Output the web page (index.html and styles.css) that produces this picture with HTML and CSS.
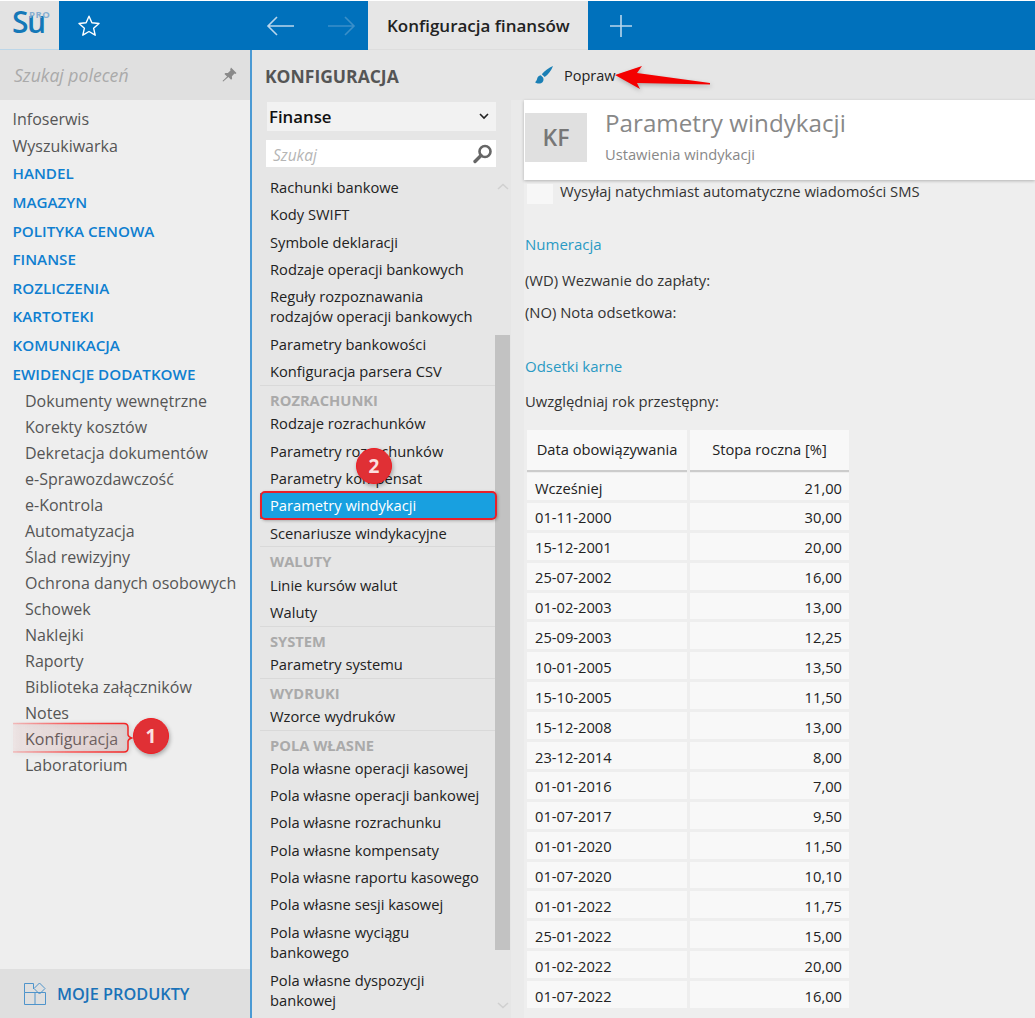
FILE: index.html
```html
<!DOCTYPE html>
<html lang="pl">
<head>
<meta charset="utf-8">
<title>Konfiguracja finansów</title>
<link rel="stylesheet" href="styles.css">
</head>
<body>
<div class="app">
  <header class="topbar">
    <div class="logo"><span class="logo-su">Su</span><span class="logo-pro">PRO</span></div>
    <div class="fav"><svg width="24" height="24" viewBox="0 0 24 24"><path d="M12 2.200l2.900 6.600 7.100.7-5.400 4.700 1.600 7-6.200-3.700-6.200 3.700 1.600-7L2 9.500l7.100-.7z" fill="none" stroke="#fff" stroke-width="1.400" stroke-linejoin="round"/></svg></div>
    <div class="navs">
      <svg width="30" height="22" viewBox="0 0 30 22"><path d="M28 11H2M11 2l-9 9 9 9" fill="none" stroke="#b9d6ec" stroke-width="1.600"/></svg>
      <svg width="30" height="22" viewBox="0 0 30 22"><path d="M2 11h26M19 2l9 9-9 9" fill="none" stroke="#3a8fc9" stroke-width="1.600"/></svg>
    </div>
    <div class="tab">Konfiguracja finansów</div>
    <div class="plus"><svg width="22" height="22" viewBox="0 0 22 22"><path d="M11 0v22M0 11h22" stroke="#b9d6ec" stroke-width="1.600"/></svg></div>
  </header>
  <div class="main">
    <aside class="side">
      <div class="side-search"><span>Szukaj poleceń</span>
        <svg width="16" height="16" viewBox="0 0 16 16"><path d="M10 .5l5.500 5.500-1 .9-1-.3-2.600 2.600.2 2.500-1 1-2.700-2.700L2.300 14.600 1.500 14l4.600-4.500L3.400 6.900l1-1 2.500.2L9.500 3.500 9.200 2.400z" fill="#8a8a8a"/></svg>
      </div>
      <nav class="side-menu">
        <a class="plain">Infoserwis</a>
        <a class="plain">Wyszukiwarka</a>
        <a class="cat">HANDEL</a>
        <a class="cat">MAGAZYN</a>
        <a class="cat">POLITYKA CENOWA</a>
        <a class="cat">FINANSE</a>
        <a class="cat">ROZLICZENIA</a>
        <a class="cat">KARTOTEKI</a>
        <a class="cat">KOMUNIKACJA</a>
        <a class="cat">EWIDENCJE DODATKOWE</a>
        <a class="sub">Dokumenty wewnętrzne</a>
        <a class="sub">Korekty kosztów</a>
        <a class="sub">Dekretacja dokumentów</a>
        <a class="sub">e-Sprawozdawczość</a>
        <a class="sub">e-Kontrola</a>
        <a class="sub">Automatyzacja</a>
        <a class="sub">Ślad rewizyjny</a>
        <a class="sub">Ochrona danych osobowych</a>
        <a class="sub">Schowek</a>
        <a class="sub">Naklejki</a>
        <a class="sub">Raporty</a>
        <a class="sub">Biblioteka załączników</a>
        <a class="sub">Notes</a>
        <a class="sub">Konfiguracja</a>
        <a class="sub">Laboratorium</a>
      </nav>
      <div class="products">
        <svg width="24" height="24" viewBox="0 0 24 24" fill="none" stroke="#4f94cb" stroke-width="1"><path d="M12 10.500H1.500V1.500H10.500V7M1.500 10.500V22.500H12V10.500H22.500V22.500H12"/><path d="M16.500 1l5.500 5.500-5.500 5.500L11 6.500z"/></svg>
        <span>MOJE PRODUKTY</span>
      </div>
    </aside>
    <section class="config">
      <h2 class="config-title">KONFIGURACJA</h2>
      <div class="select">Finanse<svg width="10" height="7" viewBox="0 0 10 7"><path d="M1 1l4 4 4-4" fill="none" stroke="#222" stroke-width="1.600"/></svg></div>
      <div class="find"><span>Szukaj</span><svg width="22" height="22" viewBox="0 0 22 22"><circle cx="13" cy="8.500" r="5.500" fill="none" stroke="#666" stroke-width="2.600"/><path d="M9 12.500L3 18.500" stroke="#666" stroke-width="3.400" stroke-linecap="round"/></svg></div>
      <div class="list-wrap">
        <ul class="list">
          <li>Rachunki bankowe</li>
          <li>Kody SWIFT</li>
          <li>Symbole deklaracji</li>
          <li>Rodzaje operacji bankowych</li>
          <li class="two">Reguły rozpoznawania<br>rodzajów operacji bankowych</li>
          <li>Parametry bankowości</li>
          <li>Konfiguracja parsera CSV</li>
          <li class="group">ROZRACHUNKI</li>
          <li>Rodzaje rozrachunków</li>
          <li>Parametry rozrachunków</li>
          <li>Parametry kompensat</li>
          <li class="active">Parametry windykacji</li>
          <li>Scenariusze windykacyjne</li>
          <li class="group">WALUTY</li>
          <li>Linie kursów walut</li>
          <li>Waluty</li>
          <li class="group">SYSTEM</li>
          <li>Parametry systemu</li>
          <li class="group">WYDRUKI</li>
          <li>Wzorce wydruków</li>
          <li class="group">POLA WŁASNE</li>
          <li>Pola własne operacji kasowej</li>
          <li>Pola własne operacji bankowej</li>
          <li>Pola własne rozrachunku</li>
          <li>Pola własne kompensaty</li>
          <li>Pola własne raportu kasowego</li>
          <li>Pola własne sesji kasowej</li>
          <li class="two">Pola własne wyciągu<br>bankowego</li>
          <li class="two">Pola własne dyspozycji<br>bankowej</li>
        </ul>
        <div class="scroll">
          <svg class="chev" width="12" height="7" viewBox="0 0 12 7"><path d="M1 6l5-4.500L11 6" fill="none" stroke="#d0d0d0" stroke-width="1.600"/></svg>
          <div class="thumb"></div>
          <svg class="chev" width="12" height="7" viewBox="0 0 12 7"><path d="M1 1l5 4.500L11 1" fill="none" stroke="#d0d0d0" stroke-width="1.600"/></svg>
        </div>
      </div>
    </section>
    <section class="content">
      <div class="toolbar">
        <svg width="18" height="18" viewBox="0 0 18 18"><path d="M18 0C14 1.500 9.500 5 6.800 8.300l2.900 2.800C13 8.500 16.500 4.500 18 0zM5.800 9.200C3.500 9.500 2.500 11 2.200 12.600 2 14 1.200 15.500 0 16.200c2.500 2 7 1.800 8.200-1.300.5-1.300.3-2.400-.2-3.300z" fill="#1a7fb5"/></svg>
        <span>Popraw</span>
      </div>
      <div class="doc">
        <div class="doc-head">
          <div class="tile">KF</div>
          <div>
            <h1>Parametry windykacji</h1>
            <p>Ustawienia windykacji</p>
          </div>
        </div>
        <div class="doc-body">
          <div class="check"><i></i><span>Wysyłaj natychmiast automatyczne wiadomości SMS</span></div>
          <h3 class="sec sec-num">Numeracja</h3>
          <p class="fld">(WD) Wezwanie do zapłaty:</p>
          <p class="fld">(NO) Nota odsetkowa:</p>
          <h3 class="sec sec-ods">Odsetki karne</h3>
          <p class="fld">Uwzględniaj rok przestępny:</p>
          <div class="table">
            <div class="th">Data obowiązywania</div><div class="th">Stopa roczna [%]</div>
            <div class="td">Wcześniej</div><div class="td num">21,00</div>
            <div class="td">01-11-2000</div><div class="td num">30,00</div>
            <div class="td">15-12-2001</div><div class="td num">20,00</div>
            <div class="td">25-07-2002</div><div class="td num">16,00</div>
            <div class="td">01-02-2003</div><div class="td num">13,00</div>
            <div class="td">25-09-2003</div><div class="td num">12,25</div>
            <div class="td">10-01-2005</div><div class="td num">13,50</div>
            <div class="td">15-10-2005</div><div class="td num">11,50</div>
            <div class="td">15-12-2008</div><div class="td num">13,00</div>
            <div class="td">23-12-2014</div><div class="td num">8,00</div>
            <div class="td">01-01-2016</div><div class="td num">7,00</div>
            <div class="td">01-07-2017</div><div class="td num">9,50</div>
            <div class="td">01-01-2020</div><div class="td num">11,50</div>
            <div class="td">01-07-2020</div><div class="td num">10,10</div>
            <div class="td">01-01-2022</div><div class="td num">11,75</div>
            <div class="td">25-01-2022</div><div class="td num">15,00</div>
            <div class="td">01-02-2022</div><div class="td num">20,00</div>
            <div class="td">01-07-2022</div><div class="td num">16,00</div>
          </div>
        </div>
      </div>
    </section>
  </div>
  <svg class="mark-side" width="122" height="32" viewBox="0 0 122 32">
    <defs>
      <linearGradient id="fadeFill" x1="0" x2="1" y1="0" y2="0"><stop offset="0" stop-color="#f08080" stop-opacity=".08"/><stop offset="1" stop-color="#c9a0a0" stop-opacity=".28"/></linearGradient>
      <linearGradient id="fadeLine" x1="0" x2="1" y1="0" y2="0"><stop offset="0" stop-color="#f33" stop-opacity=".25"/><stop offset=".5" stop-color="#f33" stop-opacity=".8"/><stop offset="1" stop-color="#f02020"/></linearGradient>
    </defs>
    <path d="M0 1.500H111c2.500 0 4 1.500 4 4v7c0 1.500 1 2.500 3.500 3.500-2.500 1-3.500 2-3.500 3.500v6.500c0 2.500-1.500 4-4 4H0" fill="url(#fadeFill)" stroke="url(#fadeLine)" stroke-width="1.500"/>
  </svg>
  <div class="badge badge-1">1</div>
  <div class="mark-list"></div>
  <div class="badge badge-2">2</div>
  <svg class="arrow" width="96" height="30" viewBox="0 0 96 30"><path d="M0 13L27 4l-5 7 73 10v1.500L22 21l3 6z" fill="#f40000"/></svg>
</div>
</body>
</html>
```

FILE: styles.css
```css
* { box-sizing: border-box; }
html, body { margin: 0; height: 100%; overflow: hidden; }
body { font-family: "Open Sans", "Noto Sans", "Liberation Sans", sans-serif; color: #222; background: #eee; }
.app { position: relative; width: 1035px; height: 1018px; overflow: hidden; display: flex; flex-direction: column; }

.topbar { flex: 0 0 50px; display: flex; background: #0071bc; border-top: 1px solid #fff; }
.logo { width: 59px; background: #e3e3e3; position: relative; border-bottom: 1px solid #bcd6e8; }
.logo-su { position: absolute; left: 12px; top: 4px; font-size: 30px; font-weight: 600; line-height: 34px; letter-spacing: -1.500px; color: #1478b8; }
.logo-pro { position: absolute; left: 29px; top: 9px; font-size: 9.500px; font-weight: 700; line-height: 10px; letter-spacing: .5px; color: #86aed0; }
.fav { width: 61px; display: flex; align-items: center; padding-left: 18px; }
.navs { width: 248px; display: flex; align-items: center; gap: 30px; padding-left: 146px; }
.navs svg { flex: none; }
.tab { width: 220px; background: #e6e6e6; display: flex; align-items: center; padding-left: 19px; font-size: 17px; font-weight: 600; color: #222; border-bottom: 1px solid #ddd; }
.plus { display: flex; align-items: center; padding-left: 22px; }

.main { flex: 1; display: flex; min-height: 0; }
.side { width: 252px; background: #eee; border-right: 2px solid #4b9ad4; display: flex; flex-direction: column; }
.side-search { flex: 0 0 50px; background: #e0e0e0; display: flex; align-items: center; justify-content: space-between; padding: 0 13px 0 14px; font-size: 17.600px; font-style: italic; color: #aaa; }
.side-menu { flex: 1; padding-top: 6px; display: flex; flex-direction: column; }
.side-menu a { display: block; font-size: 16px; color: #555; }
.side-menu .plain { height: 26.700px; line-height: 27px; padding-left: 12.500px; }
.side-menu .cat { height: 28.600px; line-height: 28.600px; padding-left: 12.500px; color: #0f7fd0; font-weight: 600; font-size: 15.200px; }
.side-menu .sub { height: 26px; line-height: 26px; padding-left: 25px; }
.products { flex: 0 0 49px; background: #dfdfdf; display: flex; align-items: center; gap: 10px; padding-left: 23px; color: #1a72b8; font-size: 16.300px; font-weight: 600; }

.config { width: 259px; background: #e6e6e6; display: flex; flex-direction: column; }
.config-title { flex: 0 0 51px; margin: 0; padding: 14px 0 0 13px; font-size: 17.500px; line-height: 24px; font-weight: 700; color: #555; }
.select { height: 29px; margin: 1px 15px 0 15px; background: #f2f2f2; display: flex; align-items: center; justify-content: space-between; padding: 0 7px 0 2px; font-size: 16.800px; font-weight: 600; color: #111; }
.find { height: 27px; margin: 9px 15px 0 14px; background: #fff; display: flex; align-items: center; justify-content: space-between; padding: 2px 2px 0 7px; font-size: 15.500px; font-style: italic; color: #b5b5b5; }
.find svg { margin-top: -2px; }
.list-wrap { flex: 1; min-height: 0; display: flex; overflow: hidden; margin-top: 7px; }
.list { flex: 1; margin: 0; padding: 0 0 0 8px; list-style: none; font-size: 14.700px; color: #222; }
.list li { height: 27.300px; line-height: 27.300px; padding-left: 10px; }
.list li.two { height: 48px; line-height: 20px; padding-top: 3px; }
.list li.group { height: 25.200px; line-height: 29px; margin-top: -.500px; border-top: 1px solid #d9d9d9; font-weight: 700; color: #aaa; padding-left: 10px; }
.list li.active { height: 25.300px; margin: 1px 0; line-height: 25.300px; background: #18a0e0; color: #fff; }
.scroll { width: 16px; display: flex; flex-direction: column; align-items: center; padding-top: 9px; }
.thumb { width: 15px; height: 615px; margin-top: 145px; background: #c2c2c2; flex: none; align-self: flex-start; }
.chev { flex: none; }
.scroll .chev:last-child { margin-top: 52px; }

.content { flex: 1; background: #eee; display: flex; flex-direction: column; min-width: 0; }
.toolbar { flex: 0 0 50px; background: #e6e6e6; display: flex; align-items: center; gap: 11px; padding-left: 24px; font-size: 14.500px; color: #222; }
.doc { flex: 1; min-height: 0; display: flex; flex-direction: column; background: #eee; border-left: 13px solid #eaeaea; }
.doc-head { flex: 0 0 80px; background: #fff; box-shadow: 0 1px 3px rgba(0,0,0,.25); display: flex; padding: 13px 0 0 1px; gap: 18px; position: relative; }
.tile { width: 62px; height: 49px; padding-bottom: 2px; background: #e0e0e0; display: flex; align-items: center; justify-content: center; font-size: 23px; font-weight: 600; color: #777; }
.doc-head h1 { margin: -5px 0 0; font-size: 24.200px; line-height: 30px; font-weight: 400; color: #888; }
.doc-head p { margin: 7px 0 0; font-size: 14.700px; line-height: 18px; color: #888; }
.doc-body { flex: 1; min-height: 0; overflow: hidden; padding-left: 1px; }
.check { display: flex; gap: 7px; margin-left: 2px; height: 29px; padding-top: 4px; font-size: 14.800px; color: #333; }
.check i { width: 26px; height: 20px; background: #f7f7f7; flex: none; }
.check span { margin-top: -3px; }
.sec { margin: 0; font-size: 15px; line-height: 20px; font-weight: 400; color: #2a9ac4; }
.sec-num { margin-top: 25px; }
.fld { margin: 0; font-size: 14.800px; line-height: 20px; color: #333; }
.sec-num + .fld { margin-top: 16px; }
.fld + .fld { margin-top: 12px; }
.sec-ods { margin-top: 34px; }
.sec-ods + .fld { margin-top: 15px; }
.table { margin: 19px 0 0 2px; display: grid; grid-template-columns: 160px 159px; column-gap: 3px; width: 322px; font-size: 14.700px; color: #222; }
.th { height: 42px; margin-bottom: 1px; padding-bottom: 2px; background: #f8f8f8; border-bottom: 2px solid #ccc; display: flex; align-items: center; justify-content: center; }
.td { height: 26.900px; margin-bottom: 3px; background: #f8f8f8; line-height: 27px; padding: 1.500px 7px 0 8px; }
.num { text-align: right; }

.mark-side { position: absolute; left: 13px; top: 722px; filter: drop-shadow(1px 1px 2px rgba(0,0,0,.2)); }
.mark-list { position: absolute; left: 260px; top: 491px; width: 237px; height: 29px; border: 2px solid #e8202a; border-radius: 5px; box-shadow: 1px 1px 3px rgba(0,0,0,.25); }
.badge { position: absolute; width: 36px; height: 36px; border-radius: 50%; background: #e03035; border: 1.500px solid #f01c22; color: #fbe0e0; font-size: 19px; font-weight: 700; display: flex; align-items: center; justify-content: center; box-shadow: 1px 2px 4px rgba(0,0,0,.3); }
.badge-1 { left: 133px; top: 718px; }
.badge-2 { left: 356px; top: 448px; }
.arrow { position: absolute; left: 615px; top: 62px; filter: drop-shadow(1px 2px 2px rgba(0,0,0,.25)); }
```
